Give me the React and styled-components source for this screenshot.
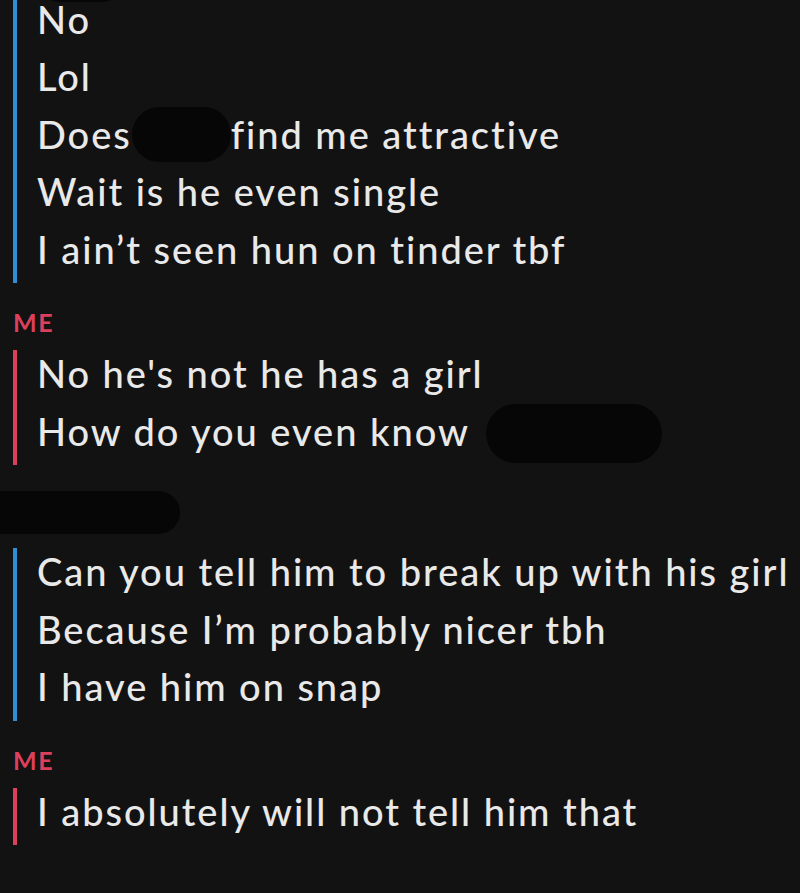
import React from 'react';
import styled, { createGlobalStyle } from 'styled-components';

const Global = createGlobalStyle`
  html, body { margin: 0; padding: 0; background: #121212; }
  body { overflow: hidden; }
`;

const Page = styled.div`
  width: 800px;
  height: 893px;
  overflow: hidden;
  background: #121212;
  font-family: Lato, "Noto Sans", sans-serif;
  color: #e9e9e9;
  display: flex;
  flex-direction: column;
`;

const Thread = styled.div`
  display: flex;
  flex-direction: column;
  margin-top: -62px;
`;

const Bubble = styled.div`
  position: relative;
  margin-left: 13px;
  border-left: 4px solid ${p => (p.$me ? '#dc405d' : '#2f8fd6')};
  padding-left: 20px;
  display: flex;
  flex-direction: column;
`;

const Line = styled.div`
  font-size: 38px;
  font-weight: 500;
  letter-spacing: 1.95px;
  line-height: 47.5px;
  padding-bottom: 10px;
  white-space: nowrap;
`;

const Redact = styled.span`
  display: inline-block;
  width: ${p => p.$w}px;
  height: ${p => p.$h}px;
  vertical-align: ${p => -p.$drop}px;
  margin: -20px 0 -10px ${p => p.$gap ?? 0}px;
  background: #060606;
  border-radius: ${p => p.$h / 2}px;
`;

const Smear = styled.div`
  position: absolute;
  left: 21px;
  top: 20px;
  width: 86px;
  height: 44px;
  background: #060606;
  border-radius: 22px;
`;

const MeLabel = styled.div`
  margin: 27px 0 15px 13px;
  font-size: 25px;
  line-height: 25px;
  font-weight: 700;
  letter-spacing: 1.5px;
  color: #dc405d;
`;

const NameBlob = styled.div`
  width: 180px;
  height: 43px;
  margin: 26px 0 14px 0;
  background: #060606;
  border-radius: 0 22px 22px 0;
`;

export default function App() {
  return (
    <Page>
      <Global />
      <Thread>
        <Bubble>
          <Smear />
          <Line>&nbsp;</Line>
          <Line>No</Line>
          <Line>Lol</Line>
          <Line>
            Does<Redact $w={99} $h={55} $drop={3} />find me attractive
          </Line>
          <Line>Wait is he even single</Line>
          <Line>I ain’t seen hun on tinder tbf</Line>
        </Bubble>

        <MeLabel>ME</MeLabel>
        <Bubble $me>
          <Line>No he's not he has a girl</Line>
          <Line>
            How do you even know<Redact $w={176} $h={59} $drop={7} $gap={16} />
          </Line>
        </Bubble>

        <NameBlob />
        <Bubble>
          <Line>Can you tell him to break up with his girl</Line>
          <Line>Because I’m probably nicer tbh</Line>
          <Line>I have him on snap</Line>
        </Bubble>

        <MeLabel>ME</MeLabel>
        <Bubble $me>
          <Line>I absolutely will not tell him that</Line>
        </Bubble>
      </Thread>
    </Page>
  );
}
